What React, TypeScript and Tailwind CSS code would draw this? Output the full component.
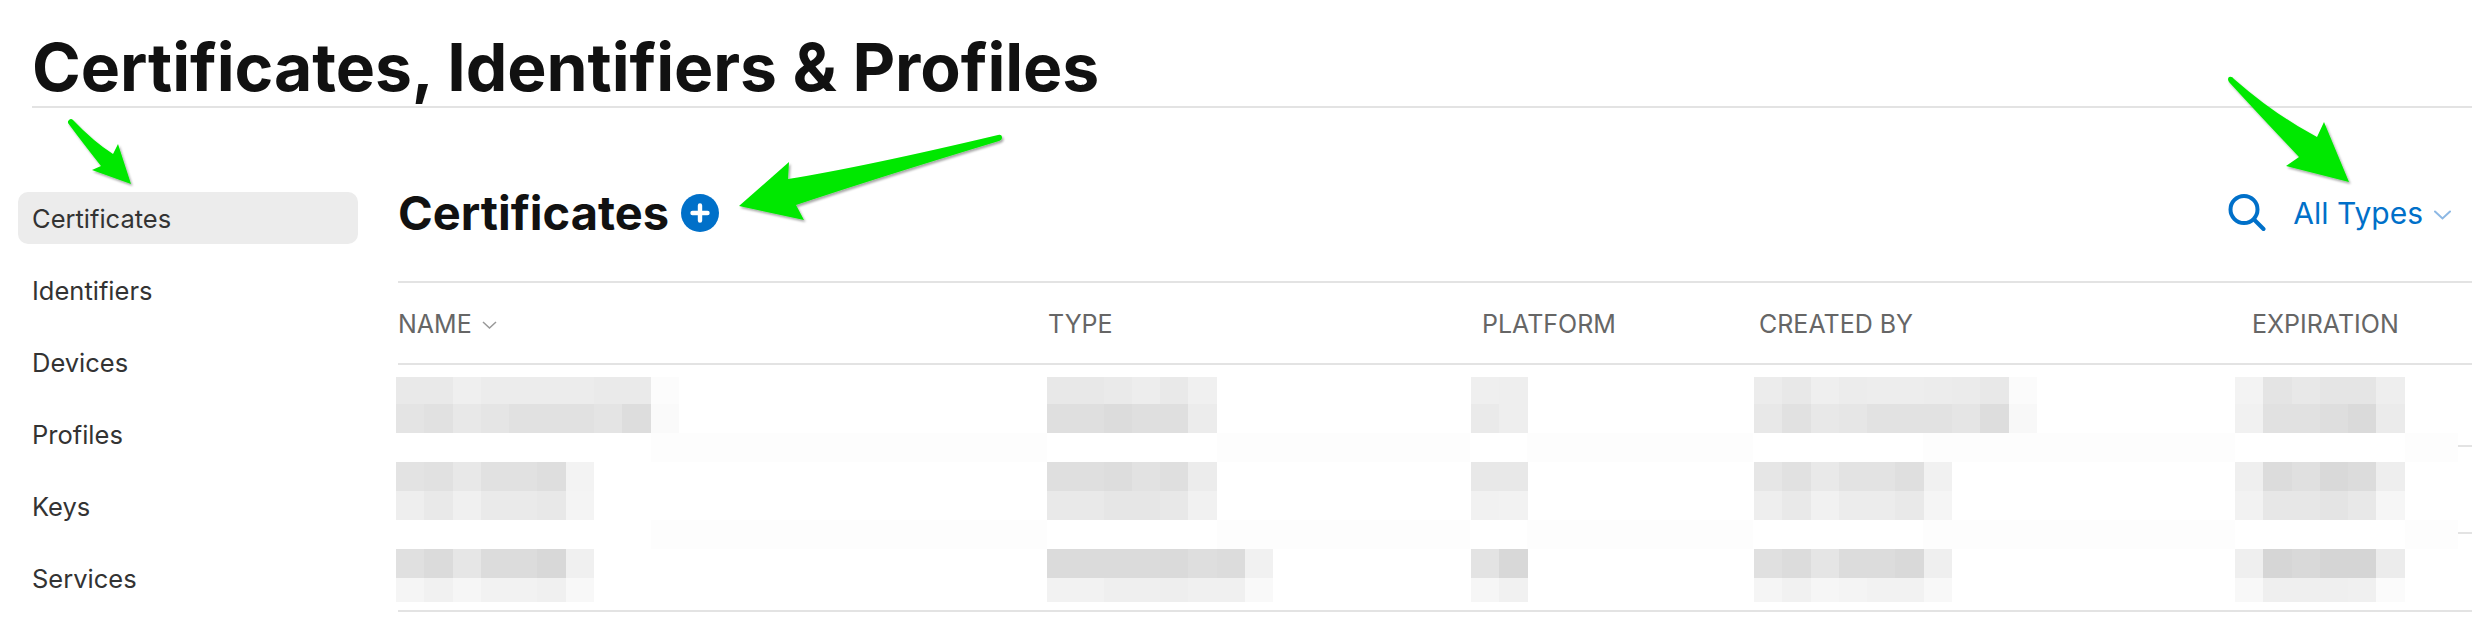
import React from 'react';

const navItems = ['Certificates', 'Identifiers', 'Devices', 'Profiles', 'Keys', 'Services'];

const columns = [
    { label: 'NAME', width: 'w-[650px]', sort: true },
    { label: 'TYPE', width: 'w-[434px]', sort: false },
    { label: 'PLATFORM', width: 'w-[277px]', sort: false },
    { label: 'CREATED BY', width: 'w-[493px]', sort: false },
    { label: 'EXPIRATION', width: 'w-[200px]', sort: false },
];

// pixelated blur blocks, one entry per column: [top cells, bottom cells]
const blurRows = [
    {
        height: 'h-[56px]',
        top: 'h-[27px]',
        bottom: 'h-[29px]',
        cols: [
            [['#e9e9e9', '#e9e9e9', '#efefef', '#ececec', '#ececec', '#ececec', '#ececec', '#eaeaea', '#eaeaea', '#fcfcfc'], ['#e4e4e4', '#e1e1e1', '#e8e8e8', '#e5e5e5', '#e1e1e1', '#e1e1e1', '#e1e1e1', '#e4e4e4', '#dddddd', '#fafafa']],
            [['#e8e8e8', '#e8e8e8', '#eaeaea', '#ededed', '#e9e9e9', '#f0f0f0'], ['#dfdfdf', '#dfdfdf', '#dcdcdc', '#dfdfdf', '#dfdfdf', '#ececec']],
            [['#efefef', '#eeeeee'], ['#eaeaea', '#eeeeee']],
            [['#ececec', '#e8e8e8', '#efefef', '#ececec', '#ededed', '#ededed', '#ececec', '#ebebeb', '#e8e8e8', '#fbfbfb'], ['#e8e8e8', '#e1e1e1', '#e8e8e8', '#e6e6e6', '#e2e2e2', '#e2e2e2', '#e2e2e2', '#e5e5e5', '#dddddd', '#f8f8f8']],
            [['#f3f3f3', '#e4e4e4', '#e8e8e8', '#e5e5e5', '#e5e5e5', '#eeeeee'], ['#f1f1f1', '#e1e1e1', '#e1e1e1', '#dedede', '#dadada', '#ebebeb']],
        ],
    },
    {
        height: 'h-[58px]',
        top: 'h-[29px]',
        bottom: 'h-[29px]',
        cols: [
            [['#e3e3e3', '#e1e1e1', '#e8e8e8', '#e1e1e1', '#e1e1e1', '#dedede', '#f3f3f3'], ['#eeeeee', '#e9e9e9', '#f0f0f0', '#eaeaea', '#eaeaea', '#e8e8e8', '#f4f4f4']],
            [['#dfdfdf', '#dfdfdf', '#dddddd', '#e2e2e2', '#dfdfdf', '#ececec'], ['#e9e9e9', '#e9e9e9', '#e6e6e6', '#e6e6e6', '#e8e8e8', '#f1f1f1']],
            [['#e8e8e8', '#e8e8e8'], ['#f1f1f1', '#f2f2f2']],
            [['#e6e6e6', '#e1e1e1', '#e9e9e9', '#e3e3e3', '#e3e3e3', '#dfdfdf', '#f1f1f1'], ['#eeeeee', '#e9e9e9', '#f1f1f1', '#ececec', '#ececec', '#e9e9e9', '#f5f5f5']],
            [['#efefef', '#dcdcdc', '#e0e0e0', '#d9d9d9', '#dcdcdc', '#eeeeee'], ['#f2f2f2', '#e7e7e7', '#e7e7e7', '#e4e4e4', '#e8e8e8', '#f6f6f6']],
        ],
    },
    {
        height: 'h-[53px]',
        top: 'h-[29px]',
        bottom: 'h-[24px]',
        cols: [
            [['#e0e0e0', '#dbdbdb', '#e6e6e6', '#dcdcdc', '#dcdcdc', '#d8d8d8', '#f0f0f0'], ['#f5f5f5', '#f1f1f1', '#f6f6f6', '#f2f2f2', '#f2f2f2', '#f0f0f0', '#f8f8f8']],
            [['#dbdbdb', '#dbdbdb', '#dbdbdb', '#dbdbdb', '#dadada', '#dedede', '#dcdcdc', '#f1f1f1'], ['#f2f2f2', '#f2f2f2', '#efefef', '#efefef', '#eeeeee', '#f0f0f0', '#f0f0f0', '#f9f9f9']],
            [['#e3e3e3', '#d8d8d8'], ['#f6f6f6', '#f1f1f1']],
            [['#e0e0e0', '#dcdcdc', '#e5e5e5', '#dcdcdc', '#dcdcdc', '#d9d9d9', '#efefef'], ['#f5f5f5', '#f1f1f1', '#f6f6f6', '#f4f4f4', '#f2f2f2', '#f2f2f2', '#f8f8f8']],
            [['#efefef', '#d6d6d6', '#d9d9d9', '#d5d5d5', '#d5d5d5', '#ececec'], ['#f8f8f8', '#efefef', '#efefef', '#efefef', '#f0f0f0', '#fbfbfb']],
        ],
    },
];

const blurColWidths = ['w-[651px]', 'w-[424px]', 'w-[283px]', 'w-[481px]', 'w-[200px]'];

const Cells = ({ colors, height }: { colors: string[]; height: string }) => (
    <div className={`flex ${height}`}>
        {colors.map((color, i) => (
            <div key={i} className="w-[28.3px] shrink-0" style={{ backgroundColor: color }} />
        ))}
    </div>
);

// faint band left by the blur between two rows, line only shows at the far right
const RowGap = () => (
    <div className="flex h-[29px] -ml-[2px]">
        <div className="w-[255px]" />
        <div className="w-[396px] bg-[#fdfdfd]" />
        <div className="w-[170px]" />
        <div className="w-[254px] bg-[#fdfdfd]" />
        <div className="w-[57px]" />
        <div className="w-[226px] bg-[#fdfdfd]" />
        <div className="w-[170px]" />
        <div className="w-[312px] bg-[#fdfdfd]" />
        <div className="w-[170px]" />
        <div className="w-[53px] bg-[#fdfdfd]" />
        <div className="w-[14px] pt-[12px]">
            <div className="h-[2px] bg-[#e3e3e3]" />
        </div>
    </div>
);

const Arrows = () => (
    <svg className="absolute left-0 top-0 pointer-events-none" width="2490" height="636" viewBox="0 0 2490 636">
        <defs>
            <filter id="arrowShadow" x="-20%" y="-20%" width="140%" height="140%">
                <feDropShadow dx="1.5" dy="2" stdDeviation="1.2" floodColor="#000" floodOpacity="0.35" />
            </filter>
        </defs>
        <g fill="#00e800" filter="url(#arrowShadow)">
            <path d="M69 120 Q71 118 73 120 Q94 142 113 154 L118 144 L131 184 L92 170 L101 166 Q82 142 68 123 Q67.5 121 69 120 Z" />
            <path d="M998 135 Q1002 134 1002 138 Q1002 140 999 141 Q880 177 796 205 L804 220 L739 206 L789 162 L788 179 Q863 167 998 135 Z" />
            <path d="M2229 77 Q2232 76 2234 79 Q2275 115 2317 137 L2324 122 L2349 182 L2286 166 L2299 157 Q2262 118 2229 82 Q2227 79 2229 77 Z" />
        </g>
    </svg>
);

const App = () => {
    return (
        <div className="relative w-[2490px] h-[636px] overflow-hidden bg-white font-['Inter','Liberation_Sans',sans-serif]">
            <header className="ml-[32px] mr-[18px] h-[108px] pt-[31px] border-b-2 border-[#e3e3e3]">
                <h1 className="text-[66px] leading-[72px] font-bold text-[#111111] tracking-[-0.07px]">
                    Certificates, Identifiers &amp; Profiles
                </h1>
            </header>

            <div className="flex">
                <nav className="ml-[18px] w-[340px] pt-[84px] shrink-0">
                    {navItems.map((item, i) => (
                        <div
                            key={item}
                            className={`h-[52px] mb-[20px] pl-[14px] pt-[2px] flex items-center rounded-[10px] text-[25.5px] text-[#333333] ${i === 0 ? 'bg-[#ececec]' : ''}`}
                        >
                            {item}
                        </div>
                    ))}
                </nav>

                <main className="ml-[40px] w-[2074px]">
                    <div className="h-[175px] pt-[37px] flex items-center justify-between border-b-2 border-[#e3e3e3]">
                        <div className="flex items-center gap-[12px]">
                            <h2 className="text-[47px] leading-[56px] font-bold text-[#111111]">Certificates</h2>
                            <div className="w-[38px] h-[38px] rounded-full bg-[#0070c9] flex items-center justify-center">
                                <svg width="20" height="20" viewBox="0 0 20 20">
                                    <path d="M10 2.5v15M2.5 10h15" stroke="#fff" strokeWidth="4.4" strokeLinecap="round" />
                                </svg>
                            </div>
                        </div>
                        <div className="flex items-center pr-[21px]">
                            <svg width="38" height="38" viewBox="0 0 38 38" fill="none" stroke="#0070c9" strokeWidth="4" strokeLinecap="round">
                                <circle cx="16" cy="15.5" r="13.5" />
                                <path d="M26 25.5L35.5 35" />
                            </svg>
                            <span className="ml-[27px] text-[30px] leading-[40px] text-[#0070c9]">All Types</span>
                            <svg className="ml-[11px] mt-[4px]" width="17" height="10" viewBox="0 0 17 10" fill="none" stroke="#8db8e4" strokeWidth="2" strokeLinecap="round">
                                <path d="M1 1.5l7.5 7 7.5-7" />
                            </svg>
                        </div>
                    </div>

                    <div className="h-[82px] pt-[3px] flex items-center border-b-2 border-[#e3e3e3] text-[25px] text-[#666666]">
                        {columns.map((col) => (
                            <div key={col.label} className={`${col.width} shrink-0 flex items-center gap-[10px]`}>
                                {col.label}
                                {col.sort && (
                                    <svg width="15" height="8" viewBox="0 0 15 8" fill="none" stroke="#999999" strokeWidth="1.5">
                                        <path d="M1 1l6.5 6L14 1" />
                                    </svg>
                                )}
                            </div>
                        ))}
                    </div>

                    <div className="pt-[12px] border-b-2 border-[#e3e3e3] h-[247px]">
                        {blurRows.map((row, r) => (
                            <React.Fragment key={r}>
                                <div className={`flex -ml-[2px] ${row.height}`}>
                                    {row.cols.map((col, c) => (
                                        <div key={c} className={`${blurColWidths[c]} shrink-0`}>
                                            <Cells colors={col[0]} height={row.top} />
                                            <Cells colors={col[1]} height={row.bottom} />
                                        </div>
                                    ))}
                                </div>
                                {r < 2 && <RowGap />}
                            </React.Fragment>
                        ))}
                    </div>
                </main>
            </div>

            <Arrows />
        </div>
    );
};

export default App;
